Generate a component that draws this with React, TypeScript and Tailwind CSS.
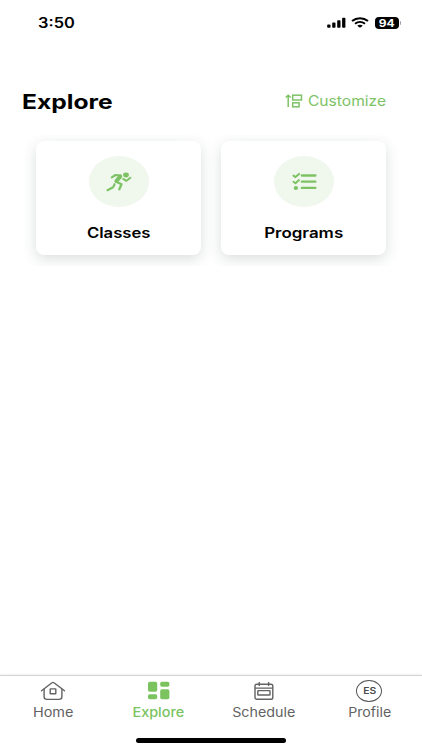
import type { ReactNode } from "react";

const WideText = ({
  className,
  children,
}: {
  className: string;
  children: ReactNode;
}) => (
  <span className={`inline-block whitespace-nowrap ${className}`}>
    {children}
  </span>
);

const SignalIcon = () => (
  <svg width="20" height="12" viewBox="0 0 20 12" fill="currentColor">
    <rect x="0.2" y="7.4" width="3.3" height="3.4" rx="0.8" />
    <rect x="5.2" y="5.6" width="3.3" height="5.2" rx="0.8" />
    <rect x="10.2" y="3.2" width="3.3" height="7.6" rx="0.8" />
    <rect x="15.1" y="0.7" width="3.3" height="10.1" rx="0.8" />
  </svg>
);

const WifiIcon = () => (
  <svg width="18" height="12" viewBox="0 0 18 12" fill="none" stroke="currentColor">
    <path d="M1 4C5.6.3 12.4.3 17 4" strokeWidth="2" />
    <path d="M4 6.7c2.9-2.3 7.1-2.3 10 0" strokeWidth="1.9" />
    <path d="M9 10.8 6.2 8.7c1.6-1.2 4-1.2 5.6 0Z" fill="currentColor" stroke="none" />
  </svg>
);

const CustomizeIcon = () => (
  <svg width="18" height="14" viewBox="0 0 18 14" fill="none" stroke="currentColor" strokeWidth="1.5">
    <path d="M3.2 13V1.4M.7 3.5l2.5-2.3 2.5 2.3" />
    <rect x="7.7" y="1.2" width="8.8" height="4.8" />
    <rect x="7.7" y="8.8" width="6.4" height="4" />
  </svg>
);

const RunnerIcon = () => (
  <svg width="26" height="20" viewBox="0 0 26 20" fill="none" stroke="currentColor" strokeLinecap="round" strokeLinejoin="round">
    <ellipse cx="20" cy="3" rx="2.9" ry="2.4" fill="currentColor" stroke="none" />
    <path d="M5.8 5.4 9.5 3l5.3.5" strokeWidth="2.1" />
    <path d="m14.2 4.6-3.8 4.4" strokeWidth="4" />
    <path d="m10.8 10 4.7 2.2-2.2 5" strokeWidth="2.3" />
    <path d="M8.6 12.2 7.1 15.3 1.5 18.2" strokeWidth="2.1" />
    <path d="m17.2 6.9 3 2 4.2-3.2" strokeWidth="1.9" />
  </svg>
);

const ChecklistIcon = () => (
  <svg className="ml-px" width="25" height="19" viewBox="0 0 25 19" fill="none" stroke="currentColor" strokeLinecap="round" strokeLinejoin="round">
    <path d="M9.8 3.5h13.6M9.8 9.7h13.6M9.8 15.9h13.6" strokeWidth="2.3" />
    <path d="m1.5 3.6 2 1.5 3.5-3.2M1.5 9.8l2 1.5L7 8.1" strokeWidth="2" />
    <ellipse cx="3.9" cy="15.9" rx="2.2" ry="2" fill="currentColor" stroke="none" />
  </svg>
);

const HomeIcon = () => (
  <svg width="26" height="20" viewBox="0 0 26 20" fill="none" stroke="currentColor" strokeWidth="1.4" strokeLinecap="round" strokeLinejoin="round">
    <path d="M1.5 9.8 12 1.8q1-.8 2 0l10.5 8" />
    <path d="M4.1 8.2v7.6q0 2.6 3 2.6h11.8q3 0 3-2.6V8.2" />
    <rect x="10.2" y="7.9" width="5.6" height="4.8" rx="0.3" />
  </svg>
);

const ExploreIcon = () => (
  <svg className="ml-px" width="22" height="20" viewBox="0 0 22 20" fill="currentColor">
    <rect x="0" y="0.7" width="9.2" height="10.1" rx="1.7" />
    <rect x="12.2" y="0.7" width="9.2" height="5" rx="1.7" />
    <rect x="0" y="13.3" width="9.2" height="5" rx="1.7" />
    <rect x="12.2" y="8.2" width="9.2" height="10.1" rx="1.7" />
  </svg>
);

const ScheduleIcon = () => (
  <svg width="20" height="20" viewBox="0 0 20 20" fill="none" stroke="currentColor" strokeWidth="1.4">
    <rect x="1" y="3.2" width="17.8" height="15" rx="1.8" />
    <path d="M1 7.1h17.8M5.2 1v4M14.6 1v4" />
    <rect x="3.8" y="9.6" width="12.2" height="4.4" rx="0.5" />
  </svg>
);

const Card = ({
  icon,
  label,
}: {
  icon: ReactNode;
  label: ReactNode;
}) => (
  <div className="flex h-[114px] w-[165px] flex-col items-center rounded-lg bg-white pt-[15px] shadow-[0_4px_14px_rgba(40,60,60,0.17)]">
    <div className="flex h-[51px] w-[60px] items-center justify-center rounded-[50%] bg-[#f0f7ed] text-[#7dc365]">
      {icon}
    </div>
    <div className="mt-4 flex h-5 items-center text-sm font-semibold">
      {label}
    </div>
  </div>
);

const Tab = ({
  icon,
  label,
  active,
}: {
  icon: ReactNode;
  label: ReactNode;
  active?: boolean;
}) => (
  <div
    className={`flex flex-1 flex-col items-center pt-1 ${
      active ? "font-medium text-[#7ac35f]" : "text-[#626262]"
    }`}
  >
    <div className="flex h-[22px] items-center">{icon}</div>
    <div className="mt-px flex h-5 items-center text-[13px]">{label}</div>
  </div>
);

export default function App() {
  return (
    <div className="flex h-[750px] w-[422px] flex-col overflow-hidden bg-white font-[Inter,sans-serif] text-black">
      <header className="flex h-[45px] items-center justify-between pr-[21px] pl-[38px]">
        <WideText className="origin-left scale-x-[1.17] pt-px text-sm font-semibold">
          3:50
        </WideText>
        <div className="flex items-center gap-1">
          <SignalIcon />
          <WifiIcon />
          <div className="ml-[2px] flex items-center">
            <div className="flex h-[12px] w-6 items-center justify-center rounded-[4px] bg-black text-[10px] leading-none font-bold text-white">
              <WideText className="scale-x-[1.2]">94</WideText>
            </div>
            <div className="ml-px h-1 w-px rounded-r bg-gray-400" />
          </div>
        </div>
      </header>

      <main className="flex-1">
        <div className="mt-[41px] flex h-[30px] items-center justify-between pr-9 pl-[22px]">
          <h1 className="pt-[2px] text-xl font-bold">
            <WideText className="origin-left scale-x-[1.23]">Explore</WideText>
          </h1>
          <div className="flex items-center text-[#7dc365]">
            <CustomizeIcon />
            <div className="flex w-[83px] justify-end text-sm">
              <WideText className="origin-right scale-x-[1.115]">
                Customize
              </WideText>
            </div>
          </div>
        </div>
        <div className="mx-[22px] mt-[19px] flex h-[131px] gap-5 overflow-hidden pt-[6px] pl-[14px]">
          <Card
            icon={<RunnerIcon />}
            label={<WideText className="scale-x-[1.19]">Classes</WideText>}
          />
          <Card
            icon={<ChecklistIcon />}
            label={<WideText className="scale-x-[1.21]">Programs</WideText>}
          />
        </div>
      </main>

      <nav className="flex h-[75px] flex-col border-t border-[#d4d4d4] shadow-[0_-1px_2px_rgba(0,0,0,0.06)]">
        <div className="flex">
          <Tab
            icon={<HomeIcon />}
            label={<WideText className="scale-x-[1.11]">Home</WideText>}
          />
          <Tab
            icon={<ExploreIcon />}
            label={<WideText className="scale-x-[1.11]">Explore</WideText>}
            active
          />
          <Tab
            icon={<ScheduleIcon />}
            label={<WideText className="scale-x-[1.1]">Schedule</WideText>}
          />
          <Tab
            icon={
              <div className="flex h-[22px] w-[26px] items-center justify-center rounded-[50%] border border-[#555] text-[9px] font-semibold text-[#4a4a4a]">
                <WideText className="scale-x-[1.15]">ES</WideText>
              </div>
            }
            label={<WideText className="scale-x-[1.09]">Profile</WideText>}
          />
        </div>
        <div className="mx-auto mt-[15px] h-[5px] w-[150px] rounded-full bg-black" />
      </nav>
    </div>
  );
}
